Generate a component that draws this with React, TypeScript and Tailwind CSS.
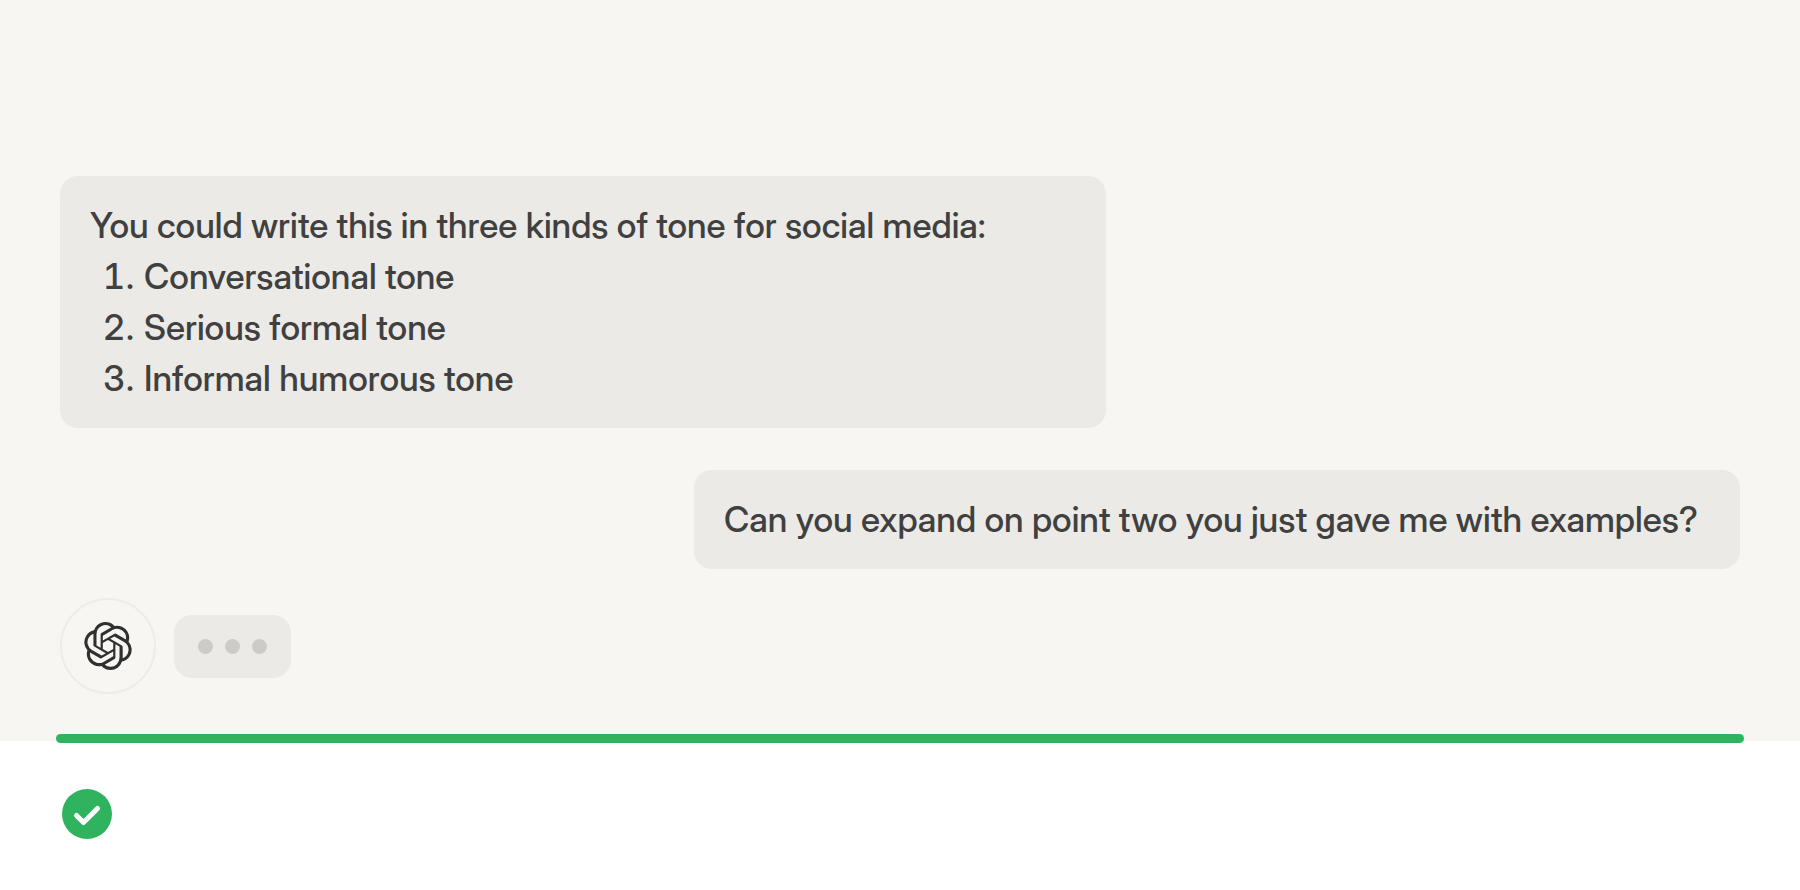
import type { ReactNode } from "react";
import { SiOpenai } from "react-icons/si";

type BubbleProps = {
    children: ReactNode;
    fromUser?: boolean;
};

const tones = ["Conversational tone", "Serious formal tone", "Informal humorous tone"];

function Bubble({ children, fromUser }: BubbleProps) {
    return (
        <div
            className={`w-full max-w-[1046px] rounded-[18px] bg-[#ebeae6] px-[30px] py-6 ${
                fromUser ? "self-end" : "self-start"
            }`}
        >
            {children}
        </div>
    );
}

function TypingIndicator() {
    return (
        <div className="flex items-center gap-[18px]">
            <div className="flex size-24 items-center justify-center rounded-full border-2 border-[#edece8]">
                <SiOpenai className="size-12 text-[#303030]" aria-label="Assistant" />
            </div>
            <div className="flex h-[63px] items-center gap-3 rounded-[18px] bg-[#ebeae6] px-6">
                <span className="size-[15px] rounded-full bg-[#cccbc7]" />
                <span className="size-[15px] rounded-full bg-[#cccbc7]" />
                <span className="size-[15px] rounded-full bg-[#cccbc7]" />
            </div>
        </div>
    );
}

export default function App() {
    return (
        <div className="flex min-h-screen flex-col bg-white font-['Inter_Display','Inter',sans-serif] text-[35px] leading-[51px] font-medium text-[#404040]">
            {/* Conversation */}
            <main className="flex flex-1 flex-col justify-end bg-[#f7f6f2] px-[60px] pt-6 pb-[47px]">
                <div className="flex flex-col gap-[42px]">
                    <Bubble>
                        <p>You could write this in three kinds of tone for social media:</p>
                        <ol className="list-decimal pl-[54px]">
                            {tones.map((tone) => (
                                <li key={tone}>{tone}</li>
                            ))}
                        </ol>
                    </Bubble>
                    <Bubble fromUser>
                        <p>Can you expand on point two you just gave me with examples?</p>
                    </Bubble>
                </div>
                <div className="mt-[29px]">
                    <TypingIndicator />
                </div>
            </main>

            {/* Status strip */}
            <footer className="h-[149px] px-14">
                <div className="-mt-[7px] h-[9px] rounded-full bg-[#2fb35f]" />
                <svg className="mt-[46px] ml-[6px] size-[50px]" viewBox="0 0 50 50" aria-label="Done">
                    <circle cx="25" cy="25" r="25" fill="#2fb35f" />
                    <path
                        d="M14.5 26.5 L21.5 33.5 L35.5 19.5"
                        fill="none"
                        stroke="#fff"
                        strokeWidth="5"
                        strokeLinecap="round"
                        strokeLinejoin="round"
                    />
                </svg>
            </footer>
        </div>
    );
}
